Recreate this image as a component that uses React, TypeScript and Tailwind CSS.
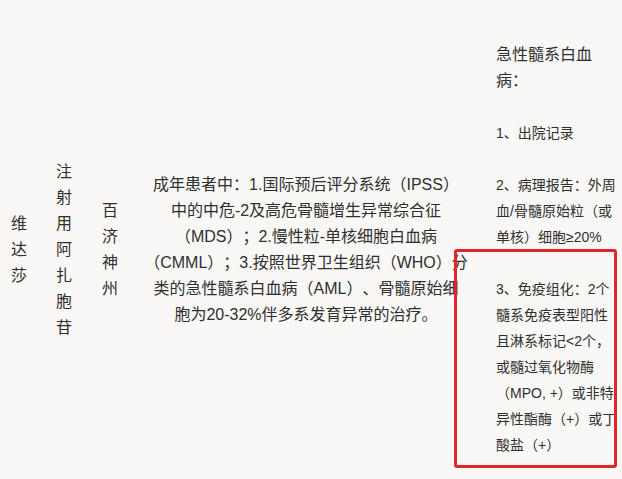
const stack = "font-['Liberation_Sans','Noto_Sans_CJK_SC',sans-serif]";

function Stack({ text, className }: { text: string; className: string }) {
  return (
    <div className={`flex flex-col items-center ${className}`}>
      {Array.from(text).map((ch, i) => (
        <span key={i}>{ch}</span>
      ))}
    </div>
  );
}

export default function App() {
  return (
    <div
      className={`relative w-[622px] h-[479px] overflow-hidden bg-[#f9f8f6] text-[#2f2f2f] [text-spacing-trim:space-all] ${stack}`}
    >
      <div className="flex items-center pt-[42px] leading-[26px]">
        <Stack text="维达莎" className="w-[38px] text-[16px]" />
        <Stack text="注射用阿扎胞苷" className="w-[52px] text-[16px]" />
        <Stack text="百济神州" className="w-[40px] text-[16px]" />

        <div className="w-[352px] text-center text-[16px]">
          成年患者中：1.国际预后评分系统（IPSS）
          <br />
          中的中危-2及高危骨髓增生异常综合征
          <br />
          （MDS）；2.慢性粒-单核细胞白血病
          <br />
          （CMML）；3.按照世界卫生组织（WHO）分
          <br />
          类的急性髓系白血病（AML）、骨髓原始细
          <br />
          胞为20-32%伴多系发育异常的治疗。
        </div>

        <div className="pl-[14px] text-[14px]">
          <p className="text-[16px]">
            急性髓系白血
            <br />
            病：
          </p>
          <p>
            <br />
          </p>
          <p>1、出院记录</p>
          <p>
            <br />
          </p>
          <p>
            2、病理报告：外周
            <br />
            血/骨髓原始粒（或
            <br />
            单核）细胞≥20%
          </p>
          <p>
            <br />
          </p>
          <p>
            3、免疫组化：2个
            <br />
            髓系免疫表型阳性
            <br />
            且淋系标记&lt;2个，
            <br />
            或髓过氧化物酶
            <br />
            （MPO, +）或非特
            <br />
            异性酯酶（+）或丁
            <br />
            酸盐（+）
          </p>
        </div>
      </div>

      {/* annotation box */}
      <div className="absolute left-[454px] top-[249px] w-[163px] h-[219px] rounded-[3px] border-[3px] border-[#e3242b]" />
    </div>
  );
}
